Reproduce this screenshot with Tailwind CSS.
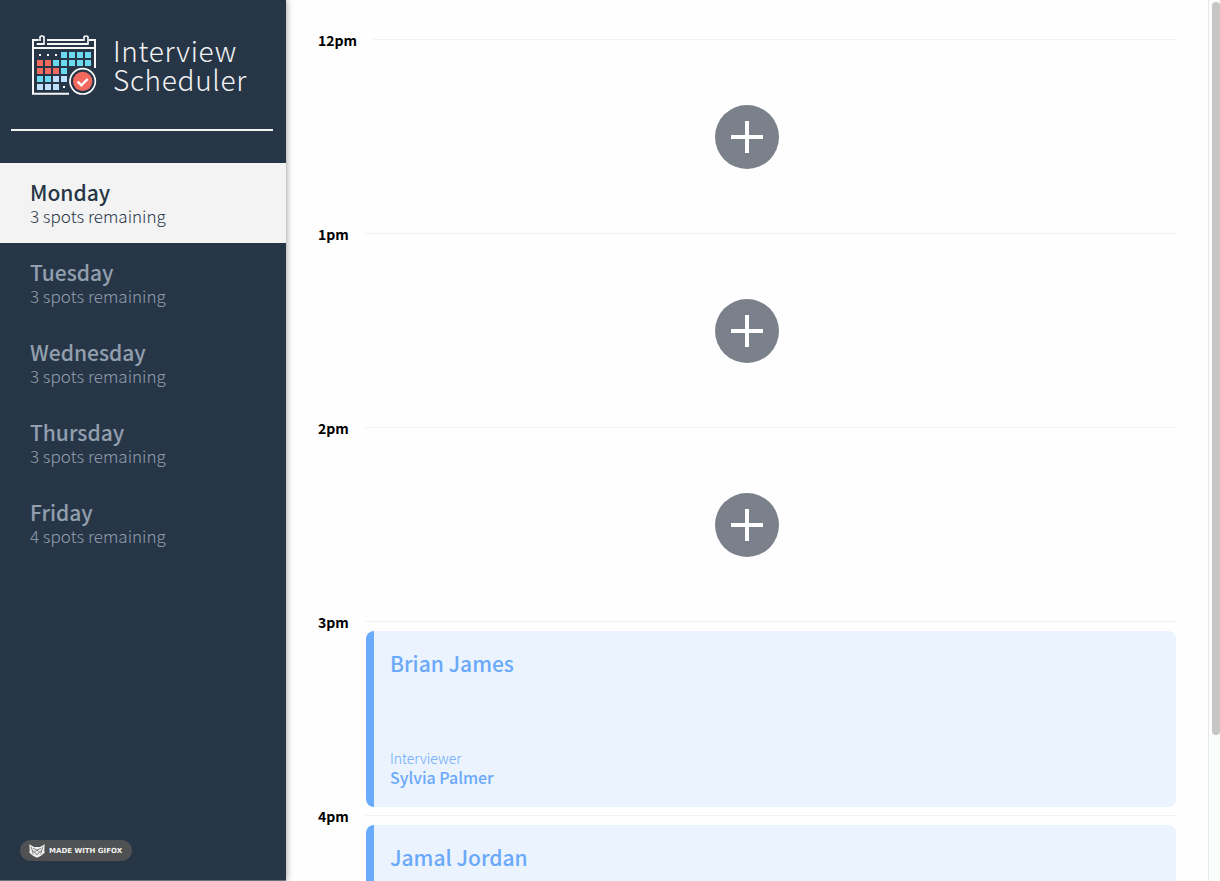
<!DOCTYPE html>
<html lang="en">
<head>
<meta charset="utf-8">
<meta name="viewport" content="width=device-width, initial-scale=1">
<title>Interview Scheduler</title>
<script src="https://cdn.jsdelivr.net/npm/@tailwindcss/browser@4"></script>
</head>
<body class="flex h-screen overflow-hidden bg-[#fefefe] font-['Noto_Sans_CJK_JP','Noto_Sans',sans-serif] text-black">

<aside class="z-10 flex w-[286px] shrink-0 flex-col border-b border-[#66717c] bg-[#273647] shadow-[1px_0_6px_rgba(0,0,0,0.35)]">
  <a href="#" class="flex items-start gap-[15px] pl-[30px] pt-[33px] text-[#f3f3f3]">
    <svg class="h-16 w-[68px] shrink-0" viewBox="30 24 204 192" fill="none" aria-hidden="true">
      <g stroke="#f8f8f8" stroke-width="6">
        <path d="M56 45H39V206H147M81 45H189M207 45H225V129M39 69H225M50 57H74M81 57H206"/>
        <path d="M60 48V37Q60 33 66 33Q72 33 72 37V57M192 48V37Q192 33 198 33Q204 33 204 37V57" stroke-width="5"/>
      </g>
      <path fill="#fff" d="M57 87h6v6h-6zM81 87h6v6h-6zM105 87h6v6h-6zM129 183h6v6h-6z"/>
      <path fill="#6bd9f0" d="M123 81h18v18h-18zM147 81h18v18h-18zM171 81h18v18h-18zM195 81h18v18h-18zM99 105h18v18h-18zM123 105h18v18h-18zM147 105h18v18h-18zM171 105h18v18h-18zM195 105h18v18h-18zM123 129h18v18h-18zM51 153h18v18h-18zM75 153h18v18h-18z"/>
      <path fill="#f2695f" d="M51 105h18v18h-18zM75 105h18v18h-18zM51 129h18v18h-18zM75 129h18v18h-18zM99 129h18v18h-18z"/>
      <path fill="#bfdfff" d="M99 153h18v18h-18zM123 153h18v18h-18zM51 177h18v18h-18zM75 177h18v18h-18zM99 177h18v18h-18z"/>
      <circle cx="188" cy="169" r="41" fill="#273647"/>
      <circle cx="188" cy="169" r="38" stroke="#fff" stroke-width="5"/>
      <circle cx="188" cy="169" r="29" fill="#f2695f"/>
      <path d="M173 170L184 181L203 162" stroke="#fff" stroke-width="7"/>
    </svg>
    <span class="pt-[3px] text-[28px] font-light leading-[29px] tracking-wide">Interview<br>Scheduler</span>
  </a>
  <hr class="ml-[11px] mr-[13px] mt-8 border-t-2 border-[#f3f3f3]">
  <nav class="mt-8 flex flex-col" aria-label="Days">
    <button type="button" class="flex h-20 flex-col justify-center bg-[#f3f3f3] px-[30px] pt-0.5 text-left text-[#273647]">
      <span class="text-[21px] font-medium leading-6">Monday</span>
      <span class="text-[17px] font-light leading-6">3 spots remaining</span>
    </button>
    <button type="button" class="flex h-20 flex-col justify-center px-[30px] pt-0.5 text-left text-[#929fae]">
      <span class="text-[21px] font-medium leading-6">Tuesday</span>
      <span class="text-[17px] font-light leading-6">3 spots remaining</span>
    </button>
    <button type="button" class="flex h-20 flex-col justify-center px-[30px] pt-0.5 text-left text-[#929fae]">
      <span class="text-[21px] font-medium leading-6">Wednesday</span>
      <span class="text-[17px] font-light leading-6">3 spots remaining</span>
    </button>
    <button type="button" class="flex h-20 flex-col justify-center px-[30px] pt-0.5 text-left text-[#929fae]">
      <span class="text-[21px] font-medium leading-6">Thursday</span>
      <span class="text-[17px] font-light leading-6">3 spots remaining</span>
    </button>
    <button type="button" class="flex h-20 flex-col justify-center px-[30px] pt-0.5 text-left text-[#929fae]">
      <span class="text-[21px] font-medium leading-6">Friday</span>
      <span class="text-[17px] font-light leading-6">4 spots remaining</span>
    </button>
  </nav>
  <a href="#" class="mb-[19px] ml-5 mt-auto flex h-[21px] w-28 items-center gap-1 rounded-full bg-[#505152] pl-[9px] font-['DejaVu_Sans',sans-serif] text-[7px] font-bold leading-none whitespace-nowrap text-[#f3f3f3]">
    <svg class="h-[14px] w-4 shrink-0" viewBox="0 0 48 42" fill="none" aria-hidden="true">
      <path fill="#eee" d="M1 1L15 9H33L47 1L46 19L47 26L35 36L24 41L13 36L1 26L2 19Z"/>
      <path stroke="#505152" stroke-width="2" d="M6 8L10 20L17 24L24 33L31 24L38 20L42 8M12 13L24 18L36 13M17 24L24 18L31 24M10 20L13 31M38 20L35 31"/>
    </svg>
    <span class="pt-px">MADE WITH GIFOX</span>
  </a>
</aside>

<main class="min-w-0 flex-1 overflow-hidden px-8 pt-[31px]">
  <article>
    <header class="flex h-[18px] gap-4">
      <h2 class="text-[14px] font-bold leading-[18px]">12pm</h2>
      <div class="mt-2 h-px flex-1 bg-[#f2f2f2]"></div>
    </header>
    <div class="flex h-44 items-center justify-center">
      <button type="button" aria-label="Add appointment at 12pm" class="flex size-16 items-center justify-center rounded-full bg-[#7b818b]">
        <svg class="size-8" viewBox="0 0 32 32" aria-hidden="true"><path stroke="#fff" stroke-width="4" d="M0 16H32M16 0V32"/></svg>
      </button>
    </div>
  </article>
  <article>
    <header class="flex h-[18px] gap-4">
      <h2 class="text-[14px] font-bold leading-[18px]">1pm</h2>
      <div class="mt-2 h-px flex-1 bg-[#f2f2f2]"></div>
    </header>
    <div class="flex h-44 items-center justify-center">
      <button type="button" aria-label="Add appointment at 1pm" class="flex size-16 items-center justify-center rounded-full bg-[#7b818b]">
        <svg class="size-8" viewBox="0 0 32 32" aria-hidden="true"><path stroke="#fff" stroke-width="4" d="M0 16H32M16 0V32"/></svg>
      </button>
    </div>
  </article>
  <article>
    <header class="flex h-[18px] gap-4">
      <h2 class="text-[14px] font-bold leading-[18px]">2pm</h2>
      <div class="mt-2 h-px flex-1 bg-[#f2f2f2]"></div>
    </header>
    <div class="flex h-44 items-center justify-center">
      <button type="button" aria-label="Add appointment at 2pm" class="flex size-16 items-center justify-center rounded-full bg-[#7b818b]">
        <svg class="size-8" viewBox="0 0 32 32" aria-hidden="true"><path stroke="#fff" stroke-width="4" d="M0 16H32M16 0V32"/></svg>
      </button>
    </div>
  </article>
  <article>
    <header class="flex h-[18px] gap-4">
      <h2 class="text-[14px] font-bold leading-[18px]">3pm</h2>
      <div class="mt-2 h-px flex-1 bg-[#f2f2f2]"></div>
    </header>
    <section class="ml-12 flex h-44 flex-col justify-between rounded-lg border-l-8 border-[#6aabfb] bg-[#ebf3fe] px-4 pb-5 pt-5 text-[#6aa9fa]">
      <h3 class="text-[21px] font-medium leading-6">Brian James</h3>
      <div>
        <h4 class="text-[14px] font-light leading-[18px]">Interviewer</h4>
        <p class="text-[16px] font-medium leading-5">Sylvia Palmer</p>
      </div>
    </section>
  </article>
  <article>
    <header class="flex h-[18px] gap-4">
      <h2 class="text-[14px] font-bold leading-[18px]">4pm</h2>
      <div class="mt-2 h-px flex-1 bg-[#f2f2f2]"></div>
    </header>
    <section class="ml-12 flex h-44 flex-col rounded-lg border-l-8 border-[#6aabfb] bg-[#ebf3fe] px-4 pb-5 pt-5 text-[#6aa9fa]">
      <h3 class="text-[21px] font-medium leading-6">Jamal Jordan</h3>
    </section>
  </article>
</main>

<div class="flex w-3 shrink-0 flex-col border-l border-[#e8e8e8] bg-[#fbfcfc] pl-[3px] pt-0.5" aria-hidden="true">
  <div class="h-[733px] rounded-full bg-[#c6c6c6]"></div>
</div>
</body>
</html>
